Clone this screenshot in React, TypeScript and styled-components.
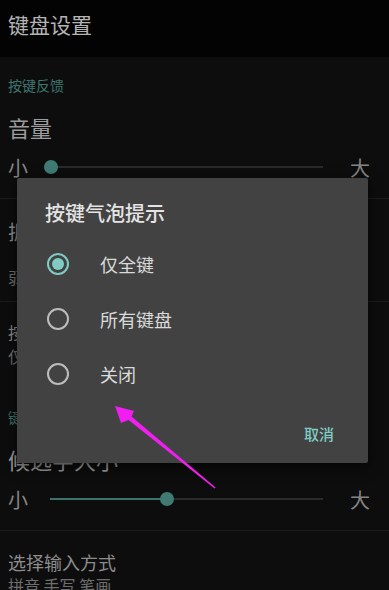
import React from "react";
import styled, { createGlobalStyle } from "styled-components";

const GlobalStyle = createGlobalStyle`
    html, body {
        margin: 0;
        padding: 0;
        background: #0d0d0d;
    }
    body {
        font-family: "Noto Sans CJK SC", "Noto Sans", Roboto, sans-serif;
        -webkit-font-smoothing: antialiased;
    }
`;

const Screen = styled.div`
    position: relative;
    width: 389px;
    height: 590px;
    overflow: hidden;
    background: #0d0d0d;
`;

const AppBar = styled.header`
    height: 57px;
    box-sizing: border-box;
    padding: 11px 8px 0;
    background: #030303;
    color: #b4b4b4;
    font-size: 21px;
    line-height: 26px;
`;

const Category = styled.div`
    height: 56px;
    padding: 0 8px;
    line-height: 56px;
    font-size: 14px;
    color: #3d766f;
`;

type TPrefProps = {
    /** bottom border under the row */
    divider?: boolean;
};

const Pref = styled.section<TPrefProps>`
    box-sizing: border-box;
    padding: 0 8px;
    border-bottom: 1px solid ${({ divider }) => (divider ? "#1c1c1c" : "transparent")};
`;

const SliderPref = styled(Pref)`
    padding-bottom: 5px;
`;

const TextPref = styled(Pref)<{ top: number; bottom: number }>`
    padding-top: ${({ top }) => top}px;
    padding-bottom: ${({ bottom }) => bottom}px;
`;

const BigTitle = styled.div`
    font-size: 22px;
    line-height: 28px;
    color: #9c9c9c;
    white-space: nowrap;
`;

const Title = styled.div<{ size: number; height: number }>`
    font-size: ${({ size }) => size}px;
    line-height: ${({ height }) => height}px;
    color: #8c8c8c;
    white-space: nowrap;
`;

const Summary = styled.div<{ height: number; gap?: number }>`
    margin-top: ${({ gap }) => gap ?? 0}px;
    font-size: 16px;
    line-height: ${({ height }) => height}px;
    color: #6e6e6e;
    white-space: nowrap;
`;

const SliderRow = styled.div`
    height: 52px;
    display: flex;
    align-items: center;
`;

const SliderLabel = styled.span`
    width: 20px;
    font-size: 20px;
    color: #858585;
`;

const Track = styled.div`
    position: relative;
    width: 273px;
    height: 2px;
    margin: 0 27px 0 22px;
    background: #2a2a2a;
`;

const TrackFill = styled.div`
    height: 100%;
    background: #3d716b;
`;

const Thumb = styled.div`
    position: absolute;
    top: 50%;
    width: 14px;
    height: 14px;
    border-radius: 50%;
    background: #3f7a73;
    transform: translate(-50%, -50%);
`;

const Dialog = styled.div`
    position: absolute;
    left: 17px;
    top: 178px;
    width: 351px;
    box-sizing: border-box;
    padding: 22px 0 12px;
    background: #424242;
    border-radius: 2px;
    box-shadow: 0 4px 14px rgba(0, 0, 0, 0.6);
`;

const DialogTitle = styled.h2`
    margin: 0 0 10px;
    padding-left: 28px;
    font-size: 20px;
    line-height: 26px;
    font-weight: 500;
    color: #e4e4e4;
`;

const OptionList = styled.div`
    display: flex;
    flex-direction: column;
`;

const Option = styled.label`
    height: 55px;
    display: flex;
    align-items: center;
    padding-left: 30px;
    gap: 31px;
    font-size: 18px;
    color: #dadada;
`;

const Radio = styled.span<{ checked: boolean }>`
    position: relative;
    width: 22px;
    height: 22px;
    box-sizing: border-box;
    border-radius: 50%;
    border: 2px solid ${({ checked }) => (checked ? "#80cbc4" : "#bdbdbd")};

    &::after {
        content: "";
        position: absolute;
        inset: 3px;
        border-radius: 50%;
        background: ${({ checked }) => (checked ? "#80cbc4" : "transparent")};
    }
`;

const DialogFooter = styled.div`
    margin-top: 14px;
    display: flex;
    justify-content: flex-end;
    padding-right: 26px;
`;

const TextButton = styled.button`
    height: 36px;
    padding: 0 8px;
    border: none;
    background: none;
    font-family: inherit;
    font-size: 15px;
    font-weight: 500;
    color: #80cbc4;
`;

const Annotation = styled.svg`
    position: absolute;
    left: 0;
    top: 0;
    pointer-events: none;
`;

type TSliderProps = { value: number };

function Slider({ value }: TSliderProps) {
    return (
        <SliderRow>
            <SliderLabel>小</SliderLabel>
            <Track>
                <TrackFill style={{ width: `${value}%` }} />
                <Thumb style={{ left: `${value}%` }} />
            </Track>
            <SliderLabel>大</SliderLabel>
        </SliderRow>
    );
}

const options = ["仅全键", "所有键盘", "关闭"];

export default function App() {
    return (
        <Screen>
            <GlobalStyle />
            <AppBar>键盘设置</AppBar>

            <Category>按键反馈</Category>
            <SliderPref divider>
                <BigTitle>音量</BigTitle>
                <Slider value={0.5} />
            </SliderPref>

            <TextPref divider top={19} bottom={12}>
                <Title size={20} height={28}>振动强度</Title>
                <Summary height={24} gap={19}>弱</Summary>
            </TextPref>

            <TextPref top={19} bottom={21}>
                <Title size={16} height={22}>按键气泡提示</Title>
                <Summary height={22} gap={2}>仅全键</Summary>
            </TextPref>

            <Category>键盘显示</Category>
            <SliderPref divider>
                <BigTitle>候选字大小</BigTitle>
                <Slider value={43} />
            </SliderPref>

            <TextPref top={20} bottom={0}>
                <Title size={18} height={22}>选择输入方式</Title>
                <Summary height={22} gap={1}>拼音 手写 笔画</Summary>
            </TextPref>

            <Dialog role="dialog">
                <DialogTitle>按键气泡提示</DialogTitle>
                <OptionList>
                    {options.map((label, i) => (
                        <Option key={label}>
                            <Radio checked={i === 0} />
                            {label}
                        </Option>
                    ))}
                </OptionList>
                <DialogFooter>
                    <TextButton>取消</TextButton>
                </DialogFooter>
            </Dialog>

            <Annotation width="389" height="590" viewBox="0 0 389 590">
                <polygon
                    points="115,406 134,411 131.5,416.5 215.6,487.4 214.6,488.6 128.5,420 121,423"
                    fill="#f01ef0"
                />
            </Annotation>
        </Screen>
    );
}
